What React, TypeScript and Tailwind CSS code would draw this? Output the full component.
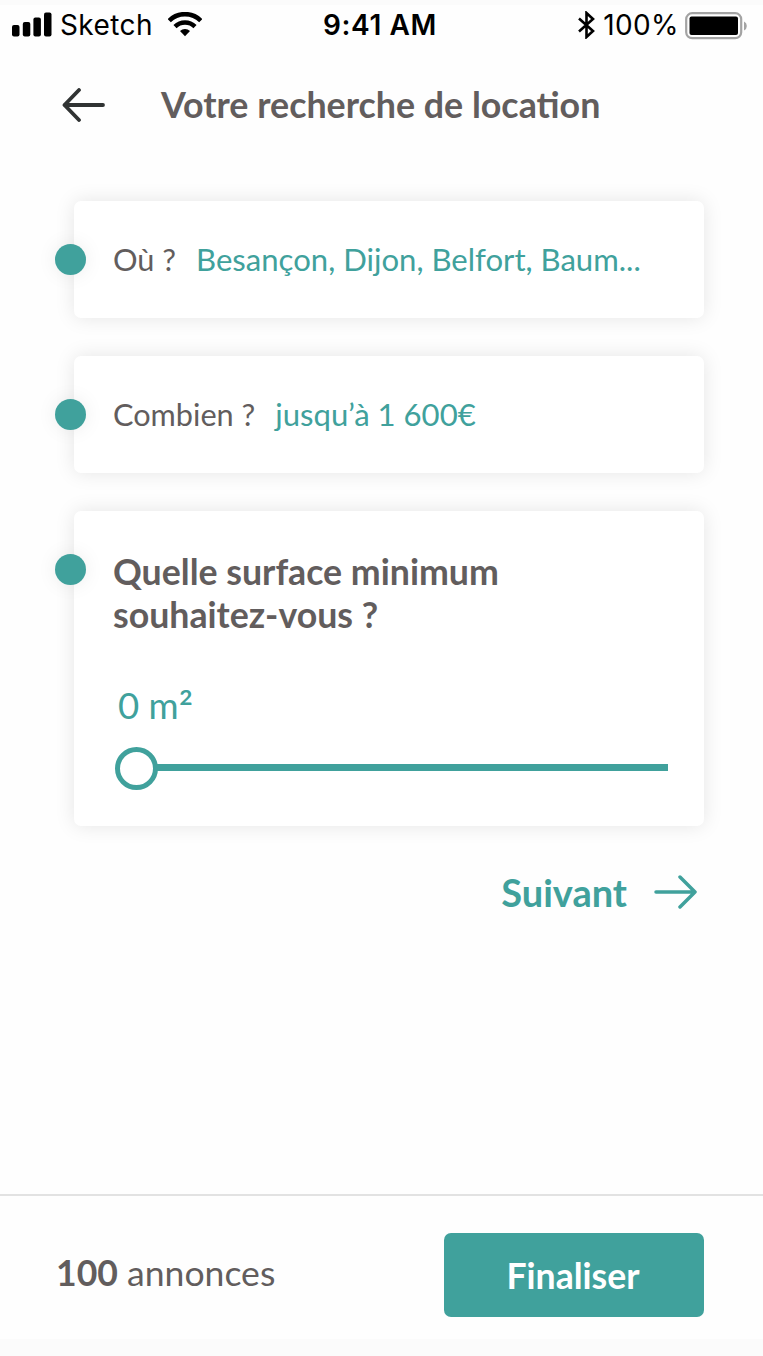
import { useState, type ReactNode } from "react"

function StatusBar() {
  return (
    <div className="flex h-[50px] items-center border-t-[5px] border-[#fbfbfb] pl-3 pr-[15px] font-['Inter','Liberation_Sans',sans-serif] text-[28px] leading-none text-black">
      <div className="flex flex-1 items-center">
        <svg width="40" height="25" viewBox="0 0 40 25" className="-mt-[7px]">
          <rect x="0" y="13" width="7.5" height="11.5" rx="2" />
          <rect x="10.8" y="10" width="7.5" height="14.5" rx="2" />
          <rect x="21.4" y="5.5" width="7.5" height="19" rx="2" />
          <rect x="32" y="0.5" width="7.5" height="24" rx="2" />
        </svg>
        <span className="-mt-[5px] ml-2 tracking-[0.4px]">Sketch</span>
        <svg width="34" height="25" viewBox="0 0 34 25" fill="none" stroke="#000" className="-mt-[7px] ml-[15px]">
          <path d="M1.2 8.7a22.3 22.3 0 0 1 31.6 0" strokeWidth="4.6" />
          <path d="M7 14.6a14.2 14.2 0 0 1 20 0" strokeWidth="4.4" />
          <path d="M17 24.3l-5-5.2a7.2 7.2 0 0 1 10 0z" fill="#000" stroke="none" />
        </svg>
      </div>
      <span className="-mt-[5px] font-semibold tracking-[0.6px]">9:41 AM</span>
      <div className="flex flex-1 items-center justify-end">
        <svg width="17" height="28" viewBox="0 0 17 28" fill="none" stroke="#000" strokeWidth="2.6" className="-mt-[6px]">
          <path d="M1 7.5L15 20 8.5 26V2L15 8 1 20.5" />
        </svg>
        <span className="-mt-[5px] ml-2 tracking-[0.4px]">100%</span>
        <svg width="63" height="28" viewBox="0 0 63 28" className="-mt-[4px] ml-1.5">
          <rect x="1.2" y="1.2" width="55" height="25" rx="6" fill="none" stroke="#a3a3a3" strokeWidth="2.2" />
          <rect x="4.5" y="4.5" width="48.5" height="18.5" rx="2" />
          <path d="M59 9.5a5 5 0 0 1 0 9z" fill="#a3a3a3" />
        </svg>
      </div>
    </div>
  )
}

function Step({ children, className = "" }: { children: ReactNode; className?: string }) {
  return (
    <section className={`relative rounded-[7px] bg-white pl-[39px] pr-9 shadow-[0_0_20px_rgba(0,0,0,0.1)] ${className}`}>
      <span className="absolute -left-[19px] top-[43px] h-[31px] w-[31px] rounded-full bg-[#40a19c] shadow-[0_0_20px_rgba(0,0,0,0.08)]" />
      {children}
    </section>
  )
}

function Summary({ label, value }: { label: string; value: string }) {
  return (
    <Step className="h-[117px] pt-[35px]">
      <p className="flex items-baseline whitespace-nowrap text-[30.7px] leading-[46px]">
        <span>{label}</span>
        <span className="ml-5 text-[31.1px] text-[#40a19c]">{value}</span>
      </p>
    </Step>
  )
}

export default function App() {
  const [surface] = useState(0)

  return (
    <div className="flex h-[1356px] w-[763px] flex-col bg-[#fefefe] font-['Lato','Liberation_Sans',sans-serif] text-[#625d5d]">
      <StatusBar />

      <header className="flex h-[110px] items-center pl-[62px]">
        <button aria-label="Retour">
          <svg width="44" height="34" viewBox="0 0 44 34" fill="none" stroke="#303333" strokeWidth="3.8" strokeLinecap="round" strokeLinejoin="round">
            <path d="M41 17H2.5M17 2L2.5 17L17 32" />
          </svg>
        </button>
        <h1 className="ml-[55px] whitespace-nowrap text-[35.8px] font-bold leading-none">Votre recherche de location</h1>
      </header>

      <main className="flex flex-1 flex-col gap-[38px] pl-[74px] pr-[59px] pt-[41px]">
        <Summary label="Où ?" value="Besançon, Dijon, Belfort, Baum..." />
        <Summary label="Combien ?" value="jusqu’à 1 600€" />

        <Step className="h-[315px] pt-[39px]">
          <h2 className="text-[35.7px] font-bold leading-[43px]">
            Quelle surface minimum
            <br />
            souhaitez-vous ?
          </h2>
          <p className="ml-[5px] mt-[47px] h-11 text-[36.6px] leading-[44px] text-[#40a19c]">
            {surface} m<span className="align-[-6px] text-[43px] leading-none">²</span>
          </p>
          <div className="mt-5 flex items-center pl-0.5">
            <span className="h-[43px] w-[43px] rounded-full border-[5px] border-[#40a19c]" />
            <span className="-ml-px -mt-0.5 h-[7px] flex-1 bg-[#40a19c]" />
          </div>
        </Step>

        <button className="mt-1.5 flex items-center self-end pr-[7px] text-[38px] font-bold leading-[44px] text-[#40a19c]">
          Suivant
          <svg width="43" height="34" viewBox="0 0 43 34" fill="none" stroke="currentColor" strokeWidth="3.5" strokeLinecap="round" strokeLinejoin="round" className="ml-[27px]">
            <path d="M2 17H41M26 2L41 17L26 32" />
          </svg>
        </button>
      </main>

      <footer className="flex h-[162px] items-start justify-between border-b-[17px] border-t-2 border-b-[#fbfbfb] border-t-[#e2e2e2] pl-[56px] pr-[59px] pt-[37px]">
        <p className="mt-[15px] text-[35.6px] leading-[50px]">
          <b>100</b> annonces
        </p>
        <button className="h-[84px] w-[260px] rounded-[7px] bg-[#40a19c] pr-0.5 pt-0.5 text-[35.6px] font-bold text-white">Finaliser</button>
      </footer>
    </div>
  )
}
